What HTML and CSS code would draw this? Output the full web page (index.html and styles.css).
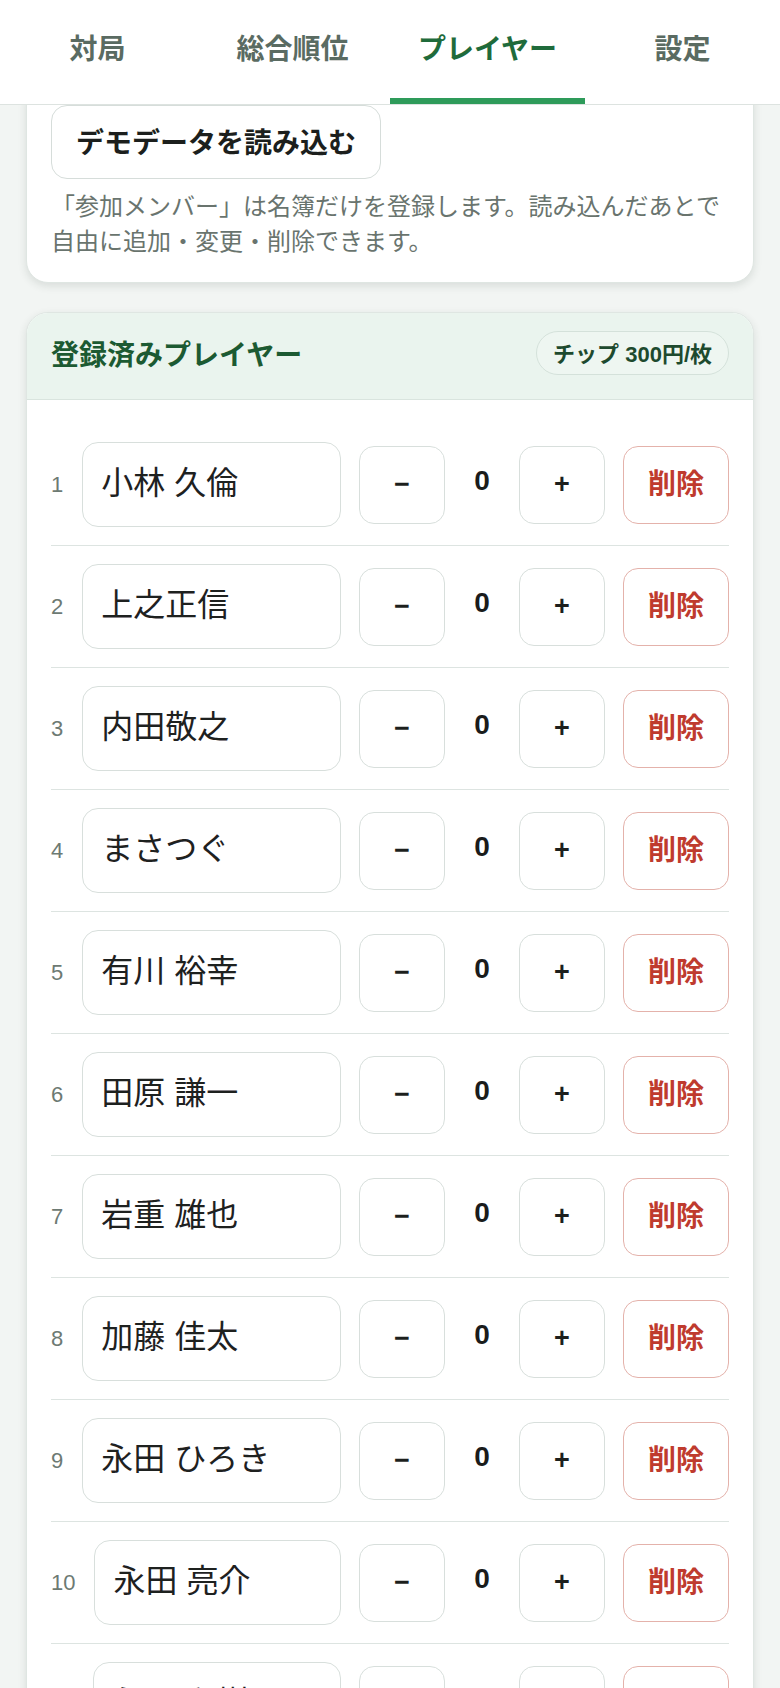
FILE: index.html
```html
<!DOCTYPE html>
<html lang="ja">
<head>
<meta charset="utf-8">
<title>プレイヤー</title>
<link rel="stylesheet" href="styles.css">
</head>
<body>
<header class="tabs">
  <div class="tab">対局</div>
  <div class="tab">総合順位</div>
  <div class="tab active">プレイヤー</div>
  <div class="tab">設定</div>
</header>
<main class="main">
  <section class="card card-top">
    <button class="btn-demo">デモデータを読み込む</button>
    <p class="note">「参加メンバー」は名簿だけを登録します。読み込んだあとで自由に追加・変更・削除できます。</p>
  </section>

  <section class="card card-players">
    <div class="card-head">
      <h2 class="card-title">登録済みプレイヤー</h2>
      <span class="chip">チップ 300円/枚</span>
    </div>
    <div class="list">
      <div class="row"><span class="num">1</span><div class="name">小林 久倫</div><button class="step">−</button><span class="val">0</span><button class="step">+</button><button class="del">削除</button></div>
      <div class="row"><span class="num">2</span><div class="name">上之正信</div><button class="step">−</button><span class="val">0</span><button class="step">+</button><button class="del">削除</button></div>
      <div class="row"><span class="num">3</span><div class="name">内田敬之</div><button class="step">−</button><span class="val">0</span><button class="step">+</button><button class="del">削除</button></div>
      <div class="row"><span class="num">4</span><div class="name">まさつぐ</div><button class="step">−</button><span class="val">0</span><button class="step">+</button><button class="del">削除</button></div>
      <div class="row"><span class="num">5</span><div class="name">有川 裕幸</div><button class="step">−</button><span class="val">0</span><button class="step">+</button><button class="del">削除</button></div>
      <div class="row"><span class="num">6</span><div class="name">田原 謙一</div><button class="step">−</button><span class="val">0</span><button class="step">+</button><button class="del">削除</button></div>
      <div class="row"><span class="num">7</span><div class="name">岩重 雄也</div><button class="step">−</button><span class="val">0</span><button class="step">+</button><button class="del">削除</button></div>
      <div class="row"><span class="num">8</span><div class="name">加藤 佳太</div><button class="step">−</button><span class="val">0</span><button class="step">+</button><button class="del">削除</button></div>
      <div class="row"><span class="num">9</span><div class="name">永田 ひろき</div><button class="step">−</button><span class="val">0</span><button class="step">+</button><button class="del">削除</button></div>
      <div class="row"><span class="num">10</span><div class="name">永田 亮介</div><button class="step">−</button><span class="val">0</span><button class="step">+</button><button class="del">削除</button></div>
      <div class="row"><span class="num">11</span><div class="name">永田 和樹</div><button class="step">−</button><span class="val">0</span><button class="step">+</button><button class="del">削除</button></div>
    </div>
  </section>
</main>
</body>
</html>
```

FILE: styles.css
```css
* { box-sizing: border-box; }

html, body {
  margin: 0;
  padding: 0;
}

body {
  background: #f2f5f3;
  font-family: "Liberation Sans", "Noto Sans CJK JP", sans-serif;
  color: #1c1f1d;
}

.tabs {
  position: sticky;
  top: 0;
  z-index: 10;
  display: grid;
  grid-template-columns: repeat(4, 1fr);
  background: #ffffff;
  border-bottom: 1px solid #dde3e0;
}

.tab {
  height: 104px;
  display: flex;
  align-items: center;
  justify-content: center;
  padding-bottom: 4px;
  font-size: 28px;
  font-weight: 700;
  color: #5a6b62;
  border-bottom: 6px solid transparent;
}

.tab.active {
  color: #1f6b3b;
  border-bottom-color: #2e9b5a;
}

.main {
  padding: 0 26px;
}

.card {
  background: #ffffff;
  border: 1px solid #dfe6e2;
  border-radius: 22px;
  box-shadow: 0 3px 8px rgba(30, 50, 40, 0.12);
}

.card-top {
  margin-top: -24px;
  padding: 23px 24px 23px;
}

.btn-demo {
  display: block;
  height: 74px;
  padding: 0 24px 2px;
  border: 1.5px solid #d6ddda;
  border-radius: 16px;
  background: #ffffff;
  font-family: inherit;
  font-size: 28px;
  font-weight: 700;
  color: #1c1f1d;
}

.note {
  margin: 10px 0 0;
  font-size: 24px;
  line-height: 35px;
  color: #69746e;
}

.card-players {
  margin-top: 29px;
  overflow: hidden;
}

.card-head {
  display: flex;
  align-items: center;
  justify-content: space-between;
  padding: 18px 24px 24px;
  background: #eaf4ee;
  border-bottom: 1px solid #d9e4de;
}

.card-title {
  margin: 0;
  font-size: 28px;
  font-weight: 700;
  color: #1c5a32;
}

.chip {
  display: flex;
  align-items: center;
  height: 44px;
  padding: 0 16px 2px;
  border: 1px solid #d4e1da;
  border-radius: 22px;
  background: #eef6f1;
  font-size: 22px;
  font-weight: 700;
  color: #1d4a2e;
}

.list {
  padding: 24px 24px 0;
}

.row {
  display: flex;
  align-items: center;
  gap: 18px;
  padding: 18px 0;
  border-bottom: 1px solid #dde4e1;
}

.num {
  font-size: 22px;
  color: #6d7a73;
  margin-right: 1px;
}

.name {
  flex: 1;
  min-width: 0;
  height: 85px;
  display: flex;
  align-items: center;
  padding: 0 18px 10px;
  border: 1.5px solid #d8dfdc;
  border-radius: 16px;
  background: #ffffff;
  font-size: 32px;
  color: #1e211f;
  white-space: nowrap;
}

.step {
  width: 86px;
  height: 78px;
  flex: none;
  border: 1.5px solid #d8dfdc;
  border-radius: 15px;
  background: #ffffff;
  font-family: inherit;
  font-size: 27px;
  font-weight: 700;
  color: #1c1f1d;
  padding: 0;
}

.val {
  min-width: 38px;
  text-align: center;
  font-size: 28px;
  font-weight: 700;
  color: #1a1c1b;
  margin-top: -8px;
}

.del {
  width: 106px;
  height: 78px;
  flex: none;
  border: 1.5px solid #e4b2ab;
  border-radius: 15px;
  background: #ffffff;
  font-family: inherit;
  font-size: 28px;
  font-weight: 700;
  color: #bf3b2e;
  padding: 0 0 6px;
}
```
